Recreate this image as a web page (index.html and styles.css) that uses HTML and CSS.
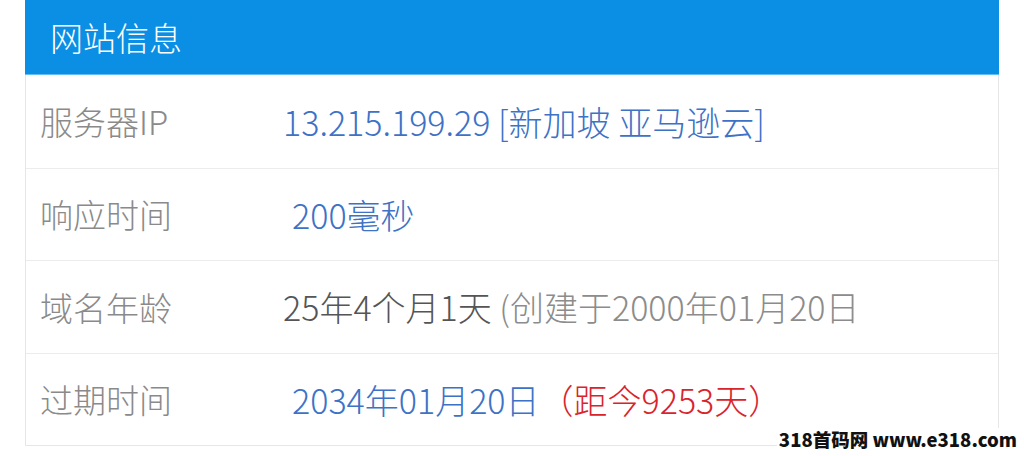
FILE: index.html
```html
<!DOCTYPE html>
<html lang="zh-CN">
<head>
<meta charset="utf-8">
<link rel="stylesheet" href="styles.css">
</head>
<body>
<div class="page">
  <section class="card">
    <header class="card-head">网站信息</header>
    <div class="row">
      <div class="label">服务器IP</div>
      <div class="value blue">13.215.199.29 [新加坡 亚马逊云]</div>
    </div>
    <div class="row">
      <div class="label">响应时间</div>
      <div class="value blue indent">200毫秒</div>
    </div>
    <div class="row">
      <div class="label">域名年龄</div>
      <div class="value"><span class="dark">25年4个月1天</span> <span class="muted">(创建于2000年01月20日</span></div>
    </div>
    <div class="row">
      <div class="label">过期时间</div>
      <div class="value indent"><span class="blue">2034年01月20日</span><span class="red">（距今9253天）</span></div>
    </div>
  </section>
  <div class="watermark">318首码网 www.e318.com</div>
</div>
</body>
</html>
```

FILE: styles.css
```css
* { box-sizing: border-box; }
html, body {
  margin: 0;
  padding: 0;
  background: #ffffff;
}
body {
  font-family: "Noto Sans CJK SC", "Noto Sans", sans-serif;
  width: 1024px;
  height: 456px;
  overflow: hidden;
}
.page {
  position: relative;
  height: 456px;
  padding-left: 25px;
}
.card {
  width: 974px;
  border: 1px solid #e6e6e6;
  border-top: none;
  background: #ffffff;
}
.card-head {
  height: 75px;
  margin: 0 -1px;
  background: #0b8fe4;
  color: #ffffff;
  font-size: 33px;
  font-weight: 300;
  line-height: 75px;
  padding-left: 25px;
  border-bottom: 1px solid #5fc0f5;
}
.row {
  display: flex;
  align-items: center;
  height: 92.5px;
  border-top: 1px solid #ececec;
}
.card-head + .row { border-top: none; }
.label {
  width: 257px;
  padding-left: 14px;
  color: #8a8a8a;
  font-size: 33px;
  font-weight: 300;
  flex: none;
}
.value {
  font-size: 34px;
  font-weight: 300;
  white-space: nowrap;
}
.indent { padding-left: 9px; }
.blue { color: #3d72c6; }
.dark { color: #555555; }
.muted { color: #8c8c8c; }
.red { color: #d9242c; }
.watermark {
  position: absolute;
  right: 5px;
  bottom: 6px;
  padding: 0 2px;
  background: #ffffff;
  color: #111111;
  font-family: "Noto Sans CJK SC", sans-serif;
  font-weight: 900;
  font-size: 18.5px;
  line-height: 22px;
}
```
